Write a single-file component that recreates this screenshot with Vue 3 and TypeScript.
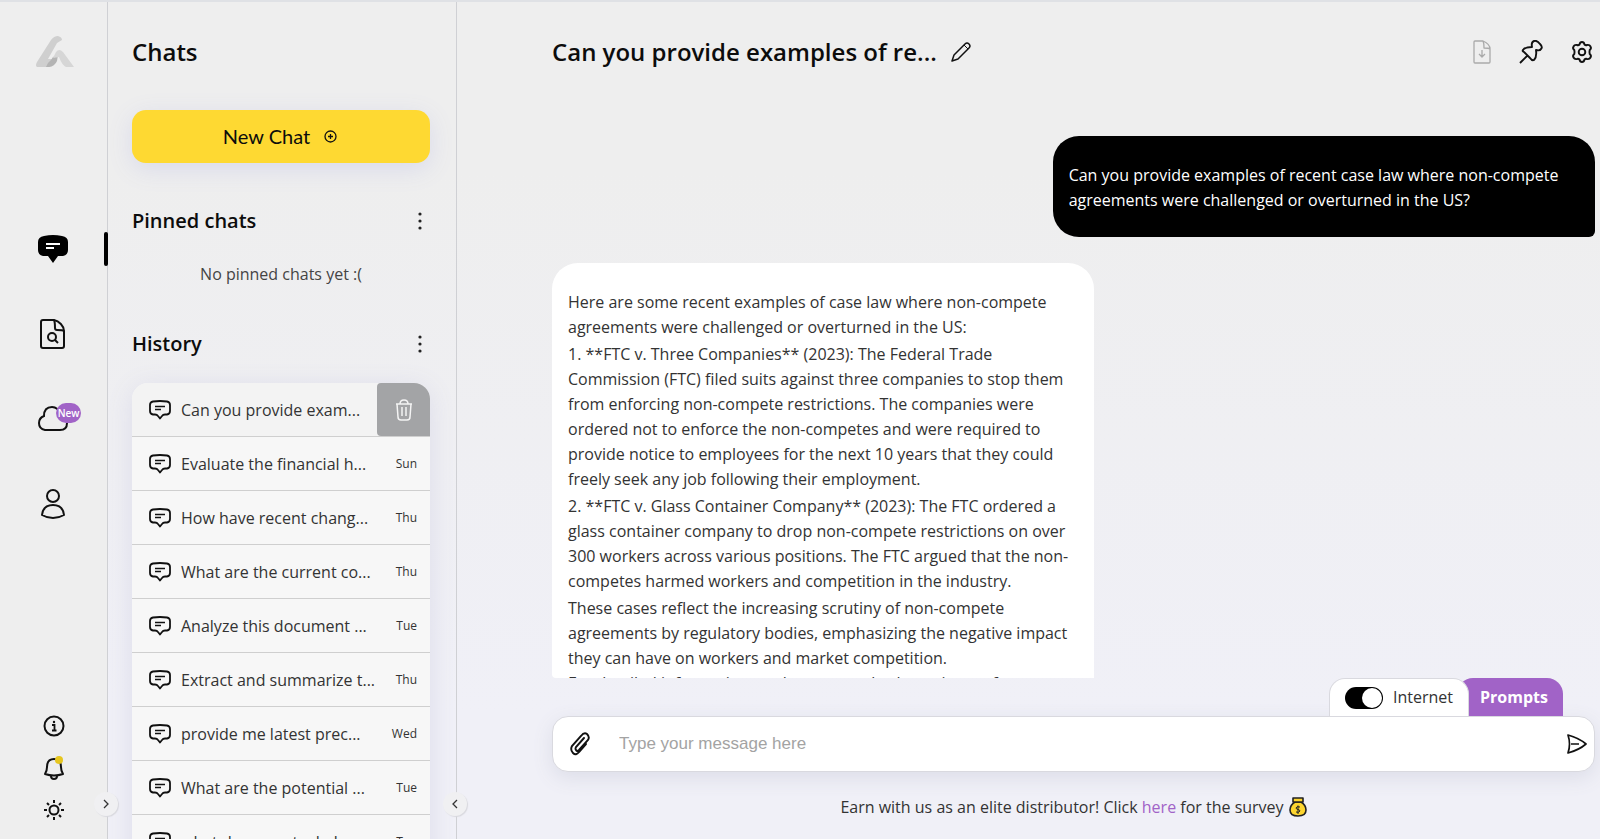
<script setup lang="ts">
import { ref } from 'vue'

interface HistoryEntry {
  title: string
  day: string
}

const history: HistoryEntry[] = [
  { title: 'Can you provide exam...', day: '' },
  { title: 'Evaluate the financial h...', day: 'Sun' },
  { title: 'How have recent chang...', day: 'Thu' },
  { title: 'What are the current co...', day: 'Thu' },
  { title: 'Analyze this document ...', day: 'Tue' },
  { title: 'Extract and summarize t...', day: 'Thu' },
  { title: 'provide me latest prec...', day: 'Wed' },
  { title: 'What are the potential ...', day: 'Tue' },
  { title: 'what documents do I n...', day: 'Tue' },
]

const answer: string[][] = [
  [
    'Here are some recent examples of case law where non-compete',
    'agreements were challenged or overturned in the US:',
  ],
  [
    '1. **FTC v. Three Companies** (2023): The Federal Trade',
    'Commission (FTC) filed suits against three companies to stop them',
    'from enforcing non-compete restrictions. The companies were',
    'ordered not to enforce the non-competes and were required to',
    'provide notice to employees for the next 10 years that they could',
    'freely seek any job following their employment.',
  ],
  [
    '2. **FTC v. Glass Container Company** (2023): The FTC ordered a',
    'glass container company to drop non-compete restrictions on over',
    '300 workers across various positions. The FTC argued that the non-',
    'competes harmed workers and competition in the industry.',
  ],
  [
    'These cases reflect the increasing scrutiny of non-compete',
    'agreements by regulatory bodies, emphasizing the negative impact',
    'they can have on workers and market competition.',
    'For detailed information on these cases, both versions refer to',
  ],
]

const internet = ref(true)
const message = ref('')
</script>

<template>
  <div class="app">
    <nav class="rail" aria-label="Main">
      <a class="logo" href="#" aria-label="Home">
        <svg width="38" height="32" viewBox="0 0 38 32">
          <path d="M1 31 Q-1 30 1 26 L15 4 Q18 0 22 0 Q26 1 26 4 L21 7 L12 23 L16 23 L19 21 L18 29 Q16 31 13 31 Z" fill="#cfcfcf" />
          <path d="M13 31 Q19 30 21 25 L22 19 L17 21 L15 24 Q12 26 10 31 Z" fill="#b4b4b4" />
          <path d="M17 22 L20 16 Q23 12 27 16 L38 31 L30 31 Q26 29 23 21 Z" fill="#d6d6d6" />
        </svg>
      </a>
      <div class="rail-main">
        <button class="rail-btn active" aria-label="Chats">
          <svg width="30" height="28" viewBox="0 0 30 28">
            <path d="M6 1 Q15 -1 24 1 Q30 2 30 7 V15 Q30 20 25 21 H20 L15 28 L10 21 H5 Q0 20 0 15 V7 Q0 2 6 1Z" fill="#000" />
            <path d="M8 9H22M8 13H16" stroke="#fff" stroke-width="2" />
          </svg>
        </button>
        <button class="rail-btn" aria-label="Documents">
          <svg width="26" height="30" viewBox="0 0 26 30" fill="none" stroke="#111" stroke-width="2" stroke-linejoin="round">
            <path d="M3 1H14C19 2 24 7 24 12V27Q24 29 22 29H3Q1 29 1 27V3Q1 1 3 1Z" />
            <path d="M14 1Q15 3 15 9Q15 11 17 11Q23 11 24 12" />
            <circle cx="12" cy="18" r="4" />
            <path d="M15 21L18 24" />
          </svg>
        </button>
        <button class="rail-btn" aria-label="Cloud, new">
          <svg width="30" height="26" viewBox="0 0 30 26" fill="none" stroke="#111" stroke-width="2">
            <path d="M7 24Q1 23 1 17Q1 12 6 10Q6 1 14 1Q20 1 22 8Q29 9 29 17Q29 24 22 24Z" />
          </svg>
          <span class="badge">New</span>
        </button>
        <button class="rail-btn" aria-label="Profile">
          <svg width="26" height="30" viewBox="0 0 26 30" fill="none" stroke="#111" stroke-width="2">
            <circle cx="13" cy="7" r="6" />
            <path d="M2 26Q3 16 13 16Q23 16 24 26Q19 29 13 29Q7 29 2 26Z" stroke-linejoin="round" />
          </svg>
        </button>
      </div>
      <div class="rail-foot">
        <button class="foot-btn" aria-label="Information">
          <svg width="22" height="22" viewBox="0 0 22 22" fill="none" stroke="#111" stroke-width="2">
            <circle cx="11" cy="11" r="9.500" />
            <path d="M9 10H11.500V15M9 15.500H13.500" stroke-width="1.800" />
            <circle cx="11" cy="7" r="1.200" fill="#111" stroke="none" />
          </svg>
        </button>
        <button class="foot-btn" aria-label="Notifications">
          <svg width="22" height="24" viewBox="0 0 22 24" fill="none" stroke="#111" stroke-width="2">
            <path d="M2 18Q4 15 4 11Q4 3 11 3Q18 3 18 11Q18 15 20 18Q11 21 2 18Z" stroke-linejoin="round" />
            <path d="M8 20Q8 23 11 23Q14 23 14 20" />
            <circle cx="16" cy="4" r="4" fill="#e6c61f" stroke="none" />
          </svg>
        </button>
        <button class="foot-btn" aria-label="Light theme">
          <svg width="22" height="22" viewBox="0 0 22 22" fill="none" stroke="#111" stroke-width="2">
            <circle cx="11" cy="11" r="4.500" />
            <path d="M11 1V4M11 18V21M1 11H4M18 11H21M4 4L6 6M16 16L18 18M4 18L6 16M16 6L18 4" />
          </svg>
        </button>
      </div>
      <button class="edge-toggle" aria-label="Expand menu">
        <svg width="6" height="10" viewBox="0 0 6 10" fill="none" stroke="#333" stroke-width="1.300"><path d="M1 1L5 5L1 9" /></svg>
      </button>
    </nav>

    <aside class="sidebar">
      <h1>Chats</h1>
      <button class="new-chat">
        <span>New Chat</span>
        <svg width="13" height="13" viewBox="0 0 13 13" fill="none" stroke="#111" stroke-width="1.300">
          <circle cx="6.500" cy="6.500" r="5.500" />
          <path d="M6.500 4V9M4 6.500H9" />
        </svg>
      </button>

      <div class="section-head pinned">
        <h2>Pinned chats</h2>
        <button class="more" aria-label="Pinned chats options">
          <svg width="4" height="18" viewBox="0 0 4 18" fill="#222"><circle cx="2" cy="2" r="1.600" /><circle cx="2" cy="9" r="1.600" /><circle cx="2" cy="16" r="1.600" /></svg>
        </button>
      </div>
      <p class="empty">No pinned chats yet :(</p>

      <div class="section-head">
        <h2>History</h2>
        <button class="more" aria-label="History options">
          <svg width="4" height="18" viewBox="0 0 4 18" fill="#222"><circle cx="2" cy="2" r="1.600" /><circle cx="2" cy="9" r="1.600" /><circle cx="2" cy="16" r="1.600" /></svg>
        </button>
      </div>
      <ul class="history">
        <li v-for="(item, i) in history" :key="item.title" :class="{ current: i === 0 }">
          <a class="chat-link" href="#">
            <svg class="chat-icon" width="22" height="20" viewBox="0 0 22 20" fill="none" stroke="#111" stroke-width="1.800" stroke-linejoin="round">
              <path d="M4 1.500Q11 .500 18 1.500Q21 2 21 5V11Q21 14 18 14.500H16Q14 14.500 13 16L11 18.500L9 16Q8 14.500 6 14.500H4Q1 14 1 11V5Q1 2 4 1.500Z" />
              <path d="M6 6.500H16M6 9.500H12" stroke-width="1.600" />
            </svg>
            <span class="chat-title">{{ item.title }}</span>
            <span v-if="item.day" class="day">{{ item.day }}</span>
          </a>
          <button v-if="i === 0" class="delete" aria-label="Delete chat">
            <svg width="18" height="22" viewBox="0 0 18 22" fill="none" stroke="#f4f4f4" stroke-width="1.500" stroke-linejoin="round">
              <path d="M1 5H17M5 5Q5 1 9 1Q13 1 13 5M2 5L3 18Q3 21 6 21H12Q15 21 15 18L16 5M7 8V17M11 8V17" />
            </svg>
          </button>
        </li>
      </ul>
      <button class="edge-toggle" aria-label="Collapse chats">
        <svg width="6" height="10" viewBox="0 0 6 10" fill="none" stroke="#333" stroke-width="1.300"><path d="M5 1L1 5L5 9" /></svg>
      </button>
    </aside>

    <main class="main">
      <header class="top">
        <h2 class="title">Can you provide examples of re...</h2>
        <button class="icon-btn" aria-label="Rename chat">
          <svg width="20" height="20" viewBox="0 0 20 20" fill="none" stroke="#111" stroke-width="1.500" stroke-linejoin="round">
            <path d="M1 19L3 13L14 2Q16 0 18 2Q20 4 18 6L7 17Z" />
            <path d="M13 3L17 7" stroke-width="1" />
          </svg>
        </button>
        <div class="actions">
          <button class="icon-btn" aria-label="Download" disabled>
            <svg width="18" height="24" viewBox="0 0 18 24" fill="none" stroke="#aaa" stroke-width="1.300" stroke-linejoin="round">
              <path d="M2 1H10Q17 4 17 9V22Q17 23 16 23H2Q1 23 1 22V2Q1 1 2 1ZM10 1Q11 3 11 8Q16 8 17 9M9 10V17M6 14L9 17L12 14" />
            </svg>
          </button>
          <button class="icon-btn" aria-label="Pin chat">
            <svg width="24" height="24" viewBox="0 0 24 24" fill="none" stroke="#111" stroke-width="1.900" stroke-linejoin="round">
              <path d="M1 23L9 15M4 10Q6 7 13 7Q12 2 15 1Q18 0 21 4Q24 7 22 9Q21 11 17 10Q18 17 15 20Q13 21 11 18L5 12Q3 11 4 10Z" />
            </svg>
          </button>
          <button class="icon-btn" aria-label="Settings">
            <svg width="22" height="22" viewBox="0 0 22 22" fill="none" stroke="#111" stroke-width="1.900" stroke-linejoin="round">
              <circle cx="11" cy="11" r="3.300" />
              <path d="M8.500 3.500Q9 1 11 1Q13 1 13.500 3.500Q14.500 4.500 16 4Q18.500 3.500 19.500 5.500Q20.700 7.500 18.700 9Q18.200 11 18.700 13Q20.700 14.500 19.500 16.500Q18.500 18.500 16 18Q14.500 17.500 13.500 18.500Q13 21 11 21Q9 21 8.500 18.500Q7.500 17.500 6 18Q3.500 18.500 2.500 16.500Q1.300 14.500 3.300 13Q3.800 11 3.300 9Q1.300 7.500 2.500 5.500Q3.500 3.500 6 4Q7.500 4.500 8.500 3.500Z" />
            </svg>
          </button>
        </div>
      </header>

      <section class="messages" aria-label="Conversation">
        <div class="bubble user">
          <p>Can you provide examples of recent case law where non-compete<br />agreements were challenged or overturned in the US?</p>
        </div>
        <div class="bubble bot">
          <p v-for="(lines, p) in answer" :key="p">
            <template v-for="(line, l) in lines" :key="l"><br v-if="l > 0" />{{ line }}</template>
          </p>
        </div>
      </section>

      <div class="tabs">
        <label class="internet">
          <input v-model="internet" type="checkbox" role="switch" />
          <span>Internet</span>
        </label>
        <button class="prompts">Prompts</button>
      </div>
      <form class="composer" @submit.prevent>
        <button class="icon-btn" type="button" aria-label="Attach file">
          <svg width="20" height="24" viewBox="0 0 20 24" fill="none" stroke="#111" stroke-width="1.900" stroke-linecap="round">
            <path d="M16 12L9 20Q6 24 3 21Q0 18 2 14L11 4Q14 0 17 2Q20 5 18 8L9 18Q7 20 6 18Q5 17 6 15L14 6" />
          </svg>
        </button>
        <input v-model="message" type="text" placeholder="Type your message here" aria-label="Message" />
        <button class="icon-btn" type="submit" aria-label="Send">
          <svg width="20" height="20" viewBox="0 0 20 20" fill="none" stroke="#111" stroke-width="1.700" stroke-linejoin="round">
            <path d="M1 1Q12 4 19 10Q12 16 1 19Q4 10 1 1ZM4 10H12" />
          </svg>
        </button>
      </form>
      <footer class="survey">
        <span>Earn with us as an elite distributor! Click <a href="#">here</a> for the survey</span>
        <svg width="18" height="20" viewBox="0 0 18 20">
          <path d="M6 5H12Q17 8 17 13Q17 19 9 19Q1 19 1 13Q1 8 6 5Z" fill="#fdd52f" stroke="#222" stroke-width="1.600" />
          <path d="M4 1H14V5H4Z" fill="#fdd52f" stroke="#222" stroke-width="1.600" stroke-linejoin="round" />
          <path d="M11 10Q7 9 7 11Q7 12 9 12.500Q11 13 11 14Q10 16 7 15M9 8.500V17" fill="none" stroke="#222" />
        </svg>
      </footer>
    </main>
  </div>
</template>

<style>
body {
  margin: 0;
}
</style>

<style scoped>
* {
  box-sizing: border-box;
}
.app {
  display: flex;
  height: 100vh;
  border-top: 2px solid #dfe1e5;
  overflow: hidden;
  background: linear-gradient(#eeeeee 20%, #f0f0f7 85%);
  color: #333;
  font: 400 16px/25px 'Open Sans', 'Noto Sans', sans-serif;
}
button {
  margin: 0;
  padding: 0;
  border: 0;
  background: none;
  font: inherit;
  color: inherit;
  cursor: pointer;
}
svg {
  display: block;
  flex: none;
}
h1,
h2,
p,
ul {
  margin: 0;
  padding: 0;
}
a {
  color: inherit;
  text-decoration: none;
}

.rail {
  position: relative;
  z-index: 2;
  flex: none;
  display: flex;
  flex-direction: column;
  width: 108px;
  padding: 34px 0 17px;
  border-right: 1px solid #cfd0d4;
  background: #eeeeee;
}
.logo {
  align-self: center;
  padding-left: 2px;
}
.rail-main {
  display: flex;
  flex-direction: column;
  gap: 49px;
  margin-top: 163px;
}
.rail-btn {
  position: relative;
  display: flex;
  align-items: center;
  justify-content: center;
  height: 36px;
  padding-right: 2px;
}
.rail-btn.active::after {
  content: '';
  position: absolute;
  top: 1px;
  right: -1px;
  width: 4px;
  height: 34px;
  border-radius: 2px;
  background: #000;
}
.badge {
  position: absolute;
  top: 2px;
  left: 56px;
  width: 25px;
  height: 20px;
  border-radius: 10px;
  background: #a163c7;
  color: #fff;
  font-size: 10px;
  font-weight: 600;
  line-height: 20px;
  text-align: center;
}
.rail-foot {
  display: flex;
  flex-direction: column;
  gap: 18px;
  margin-top: auto;
}
.foot-btn {
  display: flex;
  align-items: center;
  justify-content: center;
  height: 24px;
}
.edge-toggle {
  position: absolute;
  right: -11px;
  bottom: 23px;
  display: flex;
  align-items: center;
  justify-content: center;
  width: 24px;
  height: 24px;
  border-radius: 12px;
  background: #f0f0f2;
  box-shadow: 1px 1px 1px #d8d8de;
}

.sidebar {
  position: relative;
  z-index: 1;
  flex: none;
  display: flex;
  flex-direction: column;
  width: 349px;
  padding: 32px 26px 0 24px;
  border-right: 1px solid #cfd0d4;
}
.sidebar h1,
.title {
  color: #0c0c0c;
  font-size: 24px;
  font-weight: 600;
  line-height: 36px;
}
.sidebar h2 {
  color: #0c0c0c;
  font-size: 20px;
  font-weight: 600;
  line-height: 28px;
}
.new-chat {
  flex: none;
  display: flex;
  align-items: center;
  justify-content: center;
  gap: 14px;
  height: 53px;
  margin-top: 40px;
  padding-right: 2px;
  border-radius: 14px;
  background: #fed932;
  box-shadow: 0 6px 24px #d9daea;
  color: #0c0c0c;
  font-family: Lato, 'Open Sans', sans-serif;
  font-size: 20px;
}
.section-head {
  flex: none;
  display: flex;
  align-items: center;
  justify-content: space-between;
}
.section-head.pinned {
  margin-top: 44px;
}
.more {
  padding: 0 8px;
}
.empty {
  margin: 27px 0 43px;
  color: #444;
  text-align: center;
}
.history {
  flex: none;
  margin-top: 25px;
  border-radius: 16px 16px 0 0;
  background: #f7f7f7;
  box-shadow: 0 4px 26px #dcdcea;
  list-style: none;
}
.history li {
  display: flex;
  height: 54px;
  border-bottom: 1px solid #cfcfcf;
}
.history li.current {
  border-radius: 16px 16px 0 0;
  background: #f3f3f3;
}
.chat-link {
  flex: 1;
  display: flex;
  align-items: center;
  min-width: 0;
  padding: 0 13px 0 17px;
  white-space: nowrap;
}
.chat-title {
  flex: 1;
  min-width: 0;
  margin-left: 10px;
  padding-top: 2px;
}
.day {
  font-size: 12px;
}
.delete {
  display: flex;
  align-items: center;
  justify-content: center;
  width: 53px;
  border-radius: 4px 16px 0 4px;
  background: #a3a4a6;
}

.main {
  flex: 1;
  display: flex;
  flex-direction: column;
  min-width: 0;
  padding: 0 5px 0 95px;
}
.top {
  flex: none;
  display: flex;
  align-items: center;
  gap: 14px;
  padding-top: 32px;
}
.actions {
  display: flex;
  align-items: center;
  gap: 28px;
  margin-left: auto;
  padding-right: 2px;
}
.messages {
  flex: 1;
  display: flex;
  flex-direction: column;
  min-height: 0;
  margin-top: 66px;
  overflow: hidden;
  border-radius: 0 0 4px 4px;
}
.bubble {
  flex: none;
  width: 52%;
  padding: 27px 16px 24px;
}
.user {
  align-self: flex-end;
  border-radius: 26px 26px 6px 26px;
  background: #000;
  color: #fff;
}
.bot {
  display: flex;
  flex-direction: column;
  gap: 2px;
  margin-top: 26px;
  border-radius: 26px 26px 26px 6px;
  background: #fff;
}
.bubble p {
  white-space: nowrap;
}
.tabs {
  position: relative;
  z-index: 1;
  display: flex;
  justify-content: flex-end;
  padding-right: 32px;
}
.internet {
  position: relative;
  z-index: 1;
  display: flex;
  align-items: center;
  gap: 10px;
  height: 38px;
  padding: 0 15px;
  border: 1px solid #d9d9df;
  border-bottom: 0;
  border-radius: 16px 16px 0 0;
  background: #fff;
}
.internet input {
  appearance: none;
  display: flex;
  justify-content: flex-end;
  width: 38px;
  height: 22px;
  margin: 0;
  padding: 1px;
  border-radius: 11px;
  background: #000;
}
.internet input::before {
  content: '';
  width: 20px;
  height: 20px;
  border-radius: 50%;
  background: #fff;
}
.internet input:not(:checked) {
  justify-content: flex-start;
  background: #999;
}
.prompts {
  height: 38px;
  margin-left: -12px;
  padding: 0 15px 0 23px;
  border-radius: 16px 16px 0 0;
  background: #a163c7;
  color: #fff;
  font-weight: 700;
}
.composer {
  flex: none;
  display: flex;
  align-items: center;
  gap: 29px;
  height: 56px;
  padding: 0 7px 0 17px;
  border: 1px solid #d9d9df;
  border-radius: 16px;
  background: #fff;
  box-shadow: 0 6px 20px #dcdde8;
}
.composer input {
  flex: 1;
  min-width: 0;
  padding: 0;
  border: 0;
  outline: 0;
  background: none;
  font: 17px 'Liberation Sans', Arial, sans-serif;
}
.composer input::placeholder {
  color: #a3a3a3;
}
.survey {
  flex: none;
  display: flex;
  align-items: center;
  justify-content: center;
  gap: 5px;
  height: 67px;
  padding-top: 3px;
}
.survey a {
  color: #a163c7;
}
</style>
